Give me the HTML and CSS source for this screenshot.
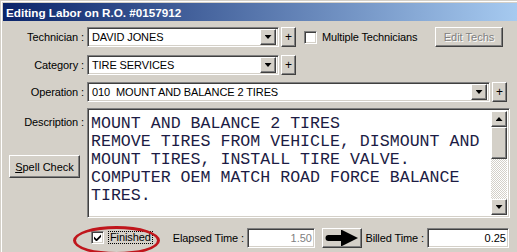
FILE: index.html
```html
<!DOCTYPE html>
<html>
<head>
    <link rel="stylesheet" href="styles.css">
</head>
<body>
    <div class="window">
        <div class="titlebar">Editing Labor on R.O. #0157912</div>

        <div class="form">
            <div class="row">
                <span class="lbl">Technician :</span>
                <div class="combo sunken combo-short">
                    <span class="combo-text">DAVID JONES</span>
                    <span class="drop raised"><i class="tri-down"></i></span>
                </div>
                <span class="plus raised">+</span>
                <span class="check sunken"></span>
                <span class="check-label">Multiple Technicians</span>
                <span class="btn raised btn-edit">Edit Techs</span>
            </div>

            <div class="row row-cat">
                <span class="lbl">Category :</span>
                <div class="combo sunken combo-short">
                    <span class="combo-text">TIRE SERVICES</span>
                    <span class="drop raised"><i class="tri-down"></i></span>
                </div>
                <span class="plus raised">+</span>
            </div>

            <div class="row row-op">
                <span class="lbl">Operation :</span>
                <div class="combo sunken combo-long">
                    <span class="combo-text">010&nbsp; MOUNT AND BALANCE 2 TIRES</span>
                    <span class="drop raised"><i class="tri-down"></i></span>
                </div>
                <span class="plus raised">+</span>
            </div>

            <div class="row row-desc">
                <div class="side">
                    <div class="lbl lbl-desc">Description :</div>
                    <span class="btn raised btn-spell"><span class="ul">S</span>pell Check</span>
                </div>
                <div class="memo sunken">
                    <div class="memo-text">MOUNT AND BALANCE 2 TIRES<br>REMOVE TIRES FROM VEHICLE, DISMOUNT AND<br>MOUNT TIRES, INSTALL TIRE VALVE.<br>COMPUTER OEM MATCH ROAD FORCE BALANCE<br>TIRES.</div>
                    <div class="vscroll">
                        <span class="sbtn raised"><i class="tri-up"></i></span>
                        <span class="thumb raised"></span>
                        <span class="track"></span>
                        <span class="sbtn raised"><i class="tri-down"></i></span>
                    </div>
                </div>
            </div>

            <div class="row row-bottom">
                <div class="finished">
                    <span class="check sunken">
                        <svg width="7" height="7" viewBox="0 0 7 7"><polygon points="0,2.5 2.5,5 7,0.5 7,3 2.5,7.5 0,5" fill="#000"/></svg>
                    </span>
                    <span class="focus">Finished</span>
                    <span class="ring"></span>
                </div>
                <span class="lbl lbl-elapsed">Elapsed Time :</span>
                <span class="field sunken field-elapsed">1.50</span>
                <span class="btn raised btn-arrow">
                    <svg width="36" height="16" viewBox="2 2 36 16"><path d="M6.5 7 H19 V1.5 L36 10 L19 18.5 V13 H6.5 A3 3 0 0 1 6.5 7 Z" fill="#000"/></svg>
                </span>
                <span class="lbl lbl-billed">Billed Time :</span>
                <span class="field sunken field-billed">0.25</span>
            </div>
        </div>
    </div>
</body>
</html>
```

FILE: styles.css
```css
body {
    margin: 0;
    background-color: #d4d0c8;
    font-family: "Liberation Sans", Arial, sans-serif;
    font-size: 11px;
    color: #000000;
    overflow: hidden;
}

.window {
    width: 517px;
    height: 252px;
    box-sizing: border-box;
    border-top: 1px solid #d4d0c8;
    border-left: 1px solid #d4d0c8;
    box-shadow: inset 1px 1px #ffffff;
    padding: 2px 0 0 2px;
    background-color: #d4d0c8;
}

.titlebar {
    height: 18px;
    line-height: 20px;
    padding-left: 3px;
    background: linear-gradient(to right, #0a246a, #a6caf0);
    color: #ffffff;
    font-weight: bold;
    font-size: 11.7px;
    white-space: nowrap;
    overflow: hidden;
}

.form {
    padding-top: 6px;
}

.row {
    display: flex;
    align-items: center;
    height: 20px;
}

.row-cat {
    margin-top: 8px;
}

.row-op {
    margin-top: 7px;
}

.lbl {
    width: 81px;
    margin-right: 3px;
    text-align: right;
    white-space: nowrap;
    letter-spacing: -0.1px;
}

/* classic 3d borders */
.raised {
    background-color: #d4d0c8;
    border: 1px solid;
    border-color: #ffffff #404040 #404040 #ffffff;
    box-shadow: inset -1px -1px #808080, inset 1px 1px #d4d0c8;
    box-sizing: border-box;
}

.sunken {
    background-color: #ffffff;
    border: 1px solid;
    border-color: #808080 #ffffff #ffffff #808080;
    box-shadow: inset 1px 1px #404040, inset -1px -1px #d4d0c8;
    box-sizing: border-box;
}

.combo {
    display: flex;
    align-items: center;
    height: 20px;
    padding: 2px;
}

.combo-short {
    width: 192px;
}

.combo-long {
    width: 403px;
}

.combo-text {
    flex: 1;
    padding-left: 2px;
    white-space: nowrap;
    overflow: hidden;
    letter-spacing: -0.1px;
}

.drop {
    width: 16px;
    height: 16px;
    display: flex;
    align-items: center;
    justify-content: center;
}

.tri-down, .tri-up {
    display: block;
    width: 7px;
    height: 4px;
    background-color: #000000;
}

.tri-down {
    clip-path: polygon(0 0, 100% 0, 50% 100%);
}

.tri-up {
    clip-path: polygon(50% 0, 100% 100%, 0 100%);
}

.plus {
    width: 15px;
    height: 20px;
    margin-left: 2px;
    display: flex;
    align-items: center;
    justify-content: center;
    font-size: 12px;
}

.check {
    width: 13px;
    height: 13px;
    margin-left: 8px;
    display: flex;
    align-items: center;
    justify-content: center;
}

.check-label {
    margin-left: 5px;
    white-space: nowrap;
    letter-spacing: -0.15px;
}

.btn {
    display: flex;
    align-items: center;
    justify-content: center;
    white-space: nowrap;
}

.btn-edit {
    width: 68px;
    height: 20px;
    margin-left: auto;
    margin-right: 14px;
    color: #808080;
    text-shadow: 1px 1px #ffffff;
}

.row-desc {
    margin-top: 6px;
    height: 110px;
    align-items: flex-start;
}

.side {
    width: 84px;
}

.lbl-desc {
    padding-top: 8px;
    line-height: 13px;
}

.btn-spell {
    width: 71px;
    height: 23px;
    margin: 26px 0 0 6px;
}

.ul {
    text-decoration: underline;
}

.memo {
    width: 423px;
    height: 110px;
    display: flex;
    padding: 2px;
}

.memo-text {
    flex: 1;
    padding: 4px 0 0 1px;
    font-family: "Courier New", "Nimbus Mono PS", "Nimbus Mono L", "FreeMono", "Liberation Mono", monospace;
    font-size: 16.6px;
    line-height: 18px;
    color: #1c1c44;
    white-space: nowrap;
    overflow: hidden;
}

.vscroll {
    width: 16px;
    display: flex;
    flex-direction: column;
}

.sbtn {
    height: 16px;
    display: flex;
    align-items: center;
    justify-content: center;
}

.thumb {
    height: 32px;
}

.track {
    flex: 1;
    background-image: conic-gradient(#ffffff 25%, #d4d0c8 0 50%, #ffffff 0 75%, #d4d0c8 0);
    background-size: 2px 2px;
}

.row-bottom {
    margin-top: 9px;
    height: 21px;
}

.finished {
    position: relative;
    width: 85px;
    margin-left: 84px;
    display: flex;
    align-items: center;
}

.finished .check {
    margin-left: 4px;
}

.focus {
    margin-left: 4px;
    padding: 0 1px;
    border: 1px dotted #000000;
    line-height: 11px;
    letter-spacing: -0.1px;
}

.ring {
    position: absolute;
    left: -14px;
    top: -5px;
    width: 87px;
    height: 29px;
    box-sizing: border-box;
    border: 3px solid #c0161c;
    border-radius: 50%;
}

.lbl-elapsed {
    width: 72px;
}

.field {
    height: 20px;
    padding: 0 2px;
    display: flex;
    align-items: center;
    justify-content: flex-end;
}

.field-elapsed {
    width: 68px;
    color: #808080;
}

.btn-arrow {
    width: 40px;
    height: 20px;
    margin-left: 7px;
}

.btn-arrow svg {
    display: block;
}

.lbl-billed {
    width: 62px;
}

.field-billed {
    width: 82px;
}
```
